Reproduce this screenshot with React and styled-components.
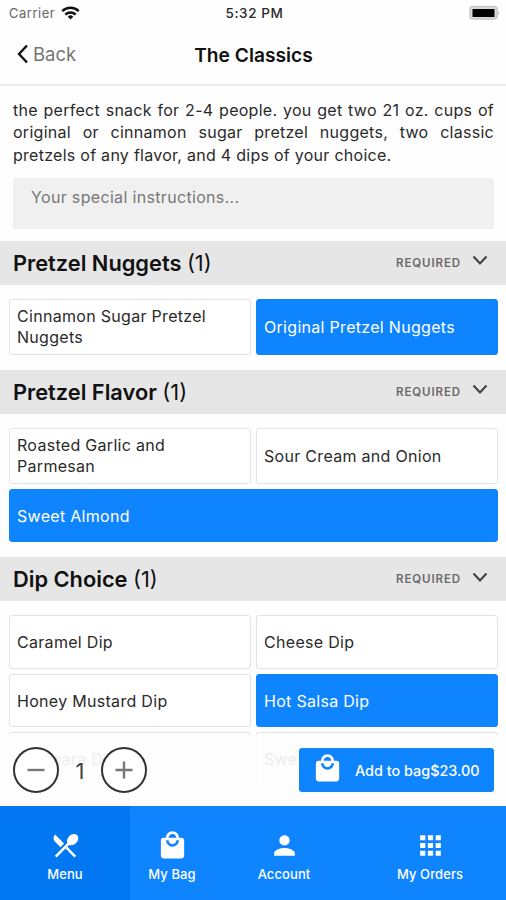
import styled, { createGlobalStyle } from "styled-components";
import {
  MdApps,
  MdLocalMall,
  MdPerson,
  MdRestaurantMenu,
} from "react-icons/md";

const sections = [
  {
    title: "Pretzel Nuggets",
    options: [
      { name: "Cinnamon Sugar Pretzel Nuggets", tall: true },
      { name: "Original Pretzel Nuggets", selected: true },
    ],
  },
  {
    title: "Pretzel Flavor",
    options: [
      { name: "Roasted Garlic and Parmesan", tall: true },
      { name: "Sour Cream and Onion" },
      { name: "Sweet Almond", selected: true, wide: true },
    ],
  },
  {
    title: "Dip Choice",
    options: [
      { name: "Caramel Dip" },
      { name: "Cheese Dip" },
      { name: "Honey Mustard Dip" },
      { name: "Hot Salsa Dip", selected: true },
      { name: "Marinara Dip" },
      { name: "Sweet Dip" },
    ],
  },
];

export default function App() {
  return (
    <>
      <GlobalStyle />
      <Screen>
        <StatusBar>
          <Carrier>
            Carrier
            <WifiIcon />
          </Carrier>
          <Clock>5:32 PM</Clock>
          <BatteryIcon />
        </StatusBar>
        <Header>
          <BackButton>
            <svg width="12" height="20" viewBox="0 0 12 20">
              <path d="M10 1.5L2 10l8 8.5" />
            </svg>
            <span>Back</span>
          </BackButton>
          <Title>The Classics</Title>
        </Header>
        <Content>
          <Description>
            the perfect snack for 2-4 people. you get two 21 oz. cups of
            original or cinnamon sugar pretzel nuggets, two classic pretzels of
            any flavor, and 4 dips of your choice.
          </Description>
          <Instructions placeholder="Your special instructions..." />
          {sections.map((section) => (
            <section key={section.title}>
              <SectionHeader>
                <h2>
                  {section.title} <span>(1)</span>
                </h2>
                <Required>REQUIRED</Required>
                <svg width="16" height="11" viewBox="0 0 16 11">
                  <path d="M1.5 1.5L8 8.5l6.500-7" />
                </svg>
              </SectionHeader>
              <Options>
                {section.options.map((option) => (
                  <Option
                    key={option.name}
                    $selected={option.selected}
                    $wide={option.wide}
                    $tall={option.tall}
                  >
                    {option.name}
                  </Option>
                ))}
              </Options>
            </section>
          ))}
        </Content>
        <OrderBar>
          <RoundButton aria-label="Remove one">
            <svg width="18" height="18" viewBox="0 0 18 18">
              <path d="M0.500 9h17" />
            </svg>
          </RoundButton>
          <Quantity>1</Quantity>
          <RoundButton aria-label="Add one">
            <svg width="18" height="18" viewBox="0 0 18 18">
              <path d="M0.500 9h17M9 0.500v17" />
            </svg>
          </RoundButton>
          <AddButton>
            <MdLocalMall size={31} />
            <span>Add to bag$23.00</span>
          </AddButton>
        </OrderBar>
        <TabBar>
          <Tab $active>
            <MdRestaurantMenu />
            Menu
          </Tab>
          <Tab>
            <MdLocalMall />
            My Bag
          </Tab>
          <Tab>
            <MdPerson />
            Account
          </Tab>
          <Tab>
            <MdApps />
            My Orders
          </Tab>
        </TabBar>
      </Screen>
    </>
  );
}

function WifiIcon() {
  return (
    <svg width="19" height="14" viewBox="0 0 19 14">
      <g fill="none" stroke="#111" strokeWidth="2.500">
        <path d="M1.300 5.200a11.600 11.600 0 0 1 16.400 0" />
        <path d="M4.300 8.600a7.400 7.400 0 0 1 10.400 0" />
      </g>
      <path d="M6.700 10.700a4 4 0 0 1 5.600 0L9.500 13.600z" fill="#111" />
    </svg>
  );
}

function BatteryIcon() {
  return (
    <svg width="31" height="16" viewBox="0 0 31 16">
      <rect x="1" y="1.500" width="27" height="12.500" rx="3" fill="#d9d9d9" stroke="#c8c8c8" strokeWidth="1.500" />
      <path d="M29 5.500q2 2.500 0 5z" fill="#bbb" />
      <rect x="3.500" y="4" width="22" height="8" rx="0.500" fill="#000" />
    </svg>
  );
}

const GlobalStyle = createGlobalStyle`
  * {
    box-sizing: border-box;
  }
  body {
    margin: 0;
    background-color: #fefefe;
    font-family: Inter, "Liberation Sans", sans-serif;
    color: #2a2a2a;
  }
  button {
    font-family: inherit;
    border: none;
    padding: 0;
  }
`;

const Screen = styled.div`
  display: flex;
  flex-direction: column;
  width: 506px;
  height: 900px;
  overflow: hidden;
`;

const StatusBar = styled.div`
  display: grid;
  grid-template-columns: 1fr auto 1fr;
  align-items: center;
  height: 27px;
  padding: 0 6px 2px 9px;
  font-size: 13px;
  flex-shrink: 0;
  > svg {
    justify-self: end;
  }
`;

const Carrier = styled.div`
  display: flex;
  align-items: center;
  gap: 6px;
  color: #666;
  letter-spacing: 0.5px;
`;

const Clock = styled.div`
  font-size: 13.500px;
  font-weight: 500;
  letter-spacing: 0.600px;
`;

const Header = styled.header`
  display: grid;
  grid-template-columns: 1fr auto 1fr;
  align-items: center;
  height: 59px;
  padding: 0 16px 0 17px;
  border-bottom: 2px solid #ececec;
  flex-shrink: 0;
`;

const BackButton = styled.button`
  display: flex;
  align-items: center;
  gap: 4px;
  margin-top: -4px;
  background: none;
  color: #757575;
  font-size: 18.500px;
  svg {
    fill: none;
    stroke: #111;
    stroke-width: 2.400;
  }
`;

const Title = styled.h1`
  margin: -2px 0 0;
  font-size: 19.200px;
  font-weight: 600;
  color: #111;
`;

const Content = styled.main`
  flex: 1;
  min-height: 0;
  padding-top: 13px;
`;

const Description = styled.p`
  margin: 0 12px 12px 13px;
  font-size: 16px;
  line-height: 22.300px;
  letter-spacing: 0.27px;
  text-align: justify;
`;

const Instructions = styled.textarea`
  display: block;
  width: 481px;
  height: 51px;
  margin: 0 12px 12px 13px;
  padding: 9px 18px;
  border: none;
  border-radius: 2px;
  background-color: #f0f0f0;
  font: 16px Inter, sans-serif;
  letter-spacing: 0.33px;
  resize: none;
  &::placeholder {
    color: #777;
  }
`;

const SectionHeader = styled.div`
  display: flex;
  align-items: center;
  height: 44px;
  padding: 0 18px 0 13px;
  background-color: #e6e6e6;
  h2 {
    margin: 0;
    flex: 1;
    font-size: 21.800px;
    font-weight: 600;
    color: #111;
    span {
      font-weight: 400;
    }
  }
  svg {
    margin-top: -4px;
    fill: none;
    stroke: #444;
    stroke-width: 2.200;
  }
`;

const Required = styled.span`
  margin-right: 11px;
  font-size: 11.500px;
  font-weight: 600;
  letter-spacing: 0.9px;
  color: #6a6a6a;
`;

const Options = styled.div`
  display: grid;
  grid-template-columns: 242px 242px;
  gap: 5px;
  padding: 14px 8px 15px 9px;
`;

const Option = styled.div`
  display: flex;
  align-items: center;
  grid-column: ${({ $wide }) => ($wide ? "span 2" : "auto")};
  min-height: ${({ $tall }) => ($tall ? "56px" : "53.500px")};
  padding: 1px 7px 0;
  border: 1.500px solid ${({ $selected }) => ($selected ? "#0f84ff" : "#e2e4e4")};
  border-radius: 3px;
  background-color: ${({ $selected }) => ($selected ? "#0f84ff" : "#fff")};
  color: ${({ $selected }) => ($selected ? "#fff" : "#2a2a2a")};
  font-size: 16px;
  line-height: 21px;
  letter-spacing: 0.3px;
`;

const OrderBar = styled.div`
  position: relative;
  display: flex;
  align-items: center;
  height: 71px;
  margin-top: -71px;
  padding: 0 12px 1px 13px;
  background-color: rgba(253, 253, 253, 0.92);
  flex-shrink: 0;
`;

const RoundButton = styled.button`
  display: flex;
  align-items: center;
  justify-content: center;
  width: 46px;
  height: 46px;
  border: 2px solid #333;
  border-radius: 50%;
  background-color: #fff;
  svg {
    fill: none;
    stroke: #777;
    stroke-width: 2.400;
  }
`;

const Quantity = styled.span`
  width: 42px;
  padding-top: 1px;
  text-align: center;
  font-size: 22px;
  color: #444;
`;

const AddButton = styled.button`
  display: flex;
  align-items: center;
  width: 195px;
  height: 44px;
  margin-left: auto;
  padding-left: 13px;
  border-radius: 3px;
  background-color: #0f84ff;
  color: #fff;
  font-size: 14.400px;
  font-weight: 500;
  svg {
    margin-bottom: 3px;
  }
  span {
    margin-left: 12px;
    white-space: nowrap;
  }
`;

const TabBar = styled.nav`
  display: grid;
  grid-template-columns: 130px 84px 140px 152px;
  height: 94px;
  background-color: #0f84ff;
  flex-shrink: 0;
`;

const Tab = styled.a`
  display: flex;
  flex-direction: column;
  align-items: center;
  padding-top: 24px;
  background-color: ${({ $active }) => ($active ? "#0277f2" : "transparent")};
  color: #fff;
  font-size: 13px;
  font-weight: 500;
  letter-spacing: 0.1px;
  svg {
    width: 31px;
    height: 31px;
    margin-bottom: 5px;
  }
`;
